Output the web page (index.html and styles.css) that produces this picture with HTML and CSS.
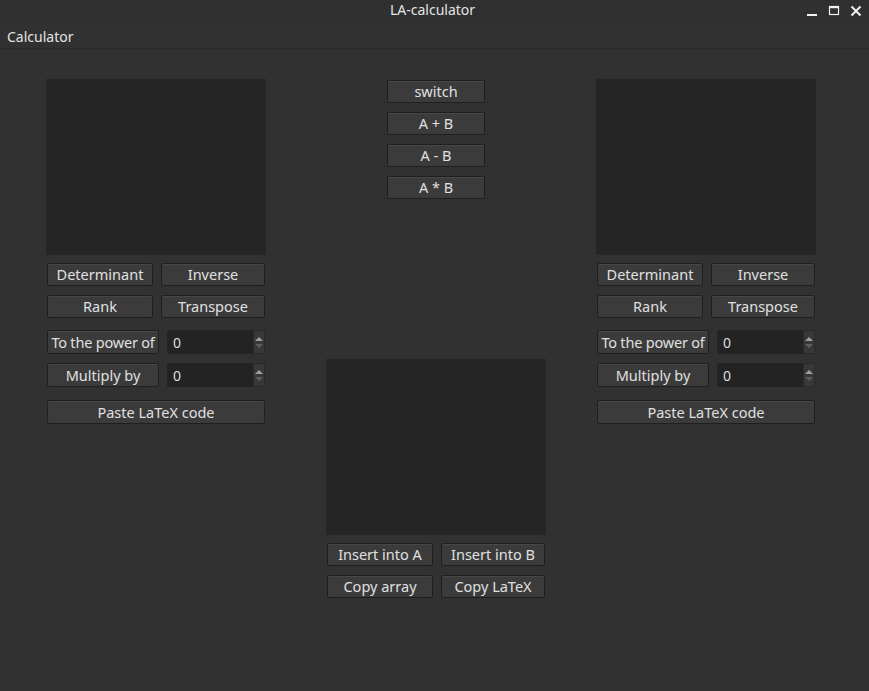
FILE: index.html
```html
<!DOCTYPE html>
<html>
<head>
<meta charset="utf-8">
<title>LA-calculator</title>
<link rel="stylesheet" href="styles.css">
</head>
<body>
<div class="window">
  <header class="titlebar">
    <span class="title">LA-calculator</span>
    <div class="controls">
      <svg class="ctl" width="14" height="14" viewBox="0 0 14 14"><rect x="2" y="10" width="10" height="2" fill="#f0f0f0"/></svg>
      <svg class="ctl" width="14" height="14" viewBox="0 0 14 14"><rect x="2.5" y="2.5" width="9" height="8" fill="none" stroke="#f0f0f0" stroke-width="1.2"/><rect x="2" y="2" width="10" height="2.2" fill="#f0f0f0"/></svg>
      <svg class="ctl" width="14" height="14" viewBox="0 0 14 14"><path d="M2.5 2.5 L11.5 11.5 M11.5 2.5 L2.5 11.5" stroke="#f0f0f0" stroke-width="2"/></svg>
    </div>
  </header>
  <nav class="menubar"><span class="menu-item">Calculator</span></nav>
  <main class="content">
    <section class="panel">
      <div class="matrix"></div>
      <div class="grid2">
        <button class="btn">Determinant</button>
        <button class="btn">Inverse</button>
        <button class="btn">Rank</button>
        <button class="btn">Transpose</button>
      </div>
      <div class="spinrows">
        <button class="btn">To the power of</button>
        <div class="spin"><span>0</span><span class="arrows"><i class="up"></i><i class="down"></i></span></div>
        <button class="btn">Multiply by</button>
        <div class="spin"><span>0</span><span class="arrows"><i class="up"></i><i class="down"></i></span></div>
      </div>
      <button class="btn wide">Paste LaTeX code</button>
    </section>
    <section class="center">
      <div class="ops">
        <button class="btn op">switch</button>
        <button class="btn op">A + B</button>
        <button class="btn op">A - B</button>
        <button class="btn op">A * B</button>
      </div>
      <div class="result">
        <div class="matrix"></div>
        <div class="grid2">
          <button class="btn">Insert into A</button>
          <button class="btn">Insert into B</button>
          <button class="btn">Copy array</button>
          <button class="btn">Copy LaTeX</button>
        </div>
      </div>
    </section>
    <section class="panel right">
      <div class="matrix"></div>
      <div class="grid2">
        <button class="btn">Determinant</button>
        <button class="btn">Inverse</button>
        <button class="btn">Rank</button>
        <button class="btn">Transpose</button>
      </div>
      <div class="spinrows">
        <button class="btn">To the power of</button>
        <div class="spin"><span>0</span><span class="arrows"><i class="up"></i><i class="down"></i></span></div>
        <button class="btn">Multiply by</button>
        <div class="spin"><span>0</span><span class="arrows"><i class="up"></i><i class="down"></i></span></div>
      </div>
      <button class="btn wide">Paste LaTeX code</button>
    </section>
  </main>
</div>
</body>
</html>
```
FILE: styles.css
```css
* { box-sizing: border-box; }
html, body { margin: 0; padding: 0; }
body {
  width: 869px;
  height: 691px;
  background: #313131;
  font-family: "Noto Sans", "DejaVu Sans", sans-serif;
  color: #dedede;
  overflow: hidden;
}
.window { display: flex; flex-direction: column; height: 100%; }
.titlebar {
  height: 24px;
  position: relative;
  display: flex;
  align-items: center;
  justify-content: center;
  background: #303030;
}
.title { font-size: 14px; color: #e4e4e4; margin-left: -4px; margin-top: -5px; }
.controls {
  position: absolute;
  right: 6px;
  top: 4px;
  display: flex;
  gap: 8px;
}
.ctl { display: block; }
.menubar {
  height: 25px;
  border-bottom: 1px solid #2a2a2a;
  display: flex;
  align-items: center;
  padding-left: 7px;
}
.menu-item { font-size: 14px; color: #e4e4e4; margin-top: 1px; }
.content {
  display: grid;
  grid-template-columns: 220px 220px 220px;
  column-gap: 60px;
  padding-left: 46px;
  padding-top: 30px;
}
.panel { display: flex; flex-direction: column; width: 220px; }
.panel.right { margin-left: -10px; }
.matrix {
  height: 176px;
  background: #252525;
}
.grid2 {
  display: grid;
  grid-template-columns: 106px 104px;
  column-gap: 8px;
  row-gap: 9px;
  margin-top: 8px;
  padding-left: 1px;
}
.spinrows {
  display: grid;
  grid-template-columns: 112px 98px;
  grid-auto-rows: 24px;
  column-gap: 8px;
  row-gap: 9px;
  margin-top: 12px;
  padding-left: 1px;
}
.btn {
  height: 23px;
  background: #3b3b3b;
  border: 1px solid #1f1f1f;
  border-radius: 2px;
  box-shadow: inset 0 1px 0 #474747;
  color: #e0e0e0;
  font-family: inherit;
  font-size: 14.5px;
  padding: 0;
  white-space: nowrap;
  line-height: 19px;
}
.spinrows .btn { height: 24px; }
.spinrows .btn:first-child { letter-spacing: -0.2px; }
.spin {
  height: 24px;
  background: #232323;
  border-radius: 2px;
  display: flex;
  align-items: center;
  justify-content: space-between;
  font-size: 14px;
  color: #dedede;
  padding-left: 6px;
}
.arrows {
  width: 12px;
  height: 24px;
  background: #383838;
  border: 1px solid #2a2a2a;
  display: flex;
  flex-direction: column;
  align-items: center;
  justify-content: center;
  gap: 3px;
  border-radius: 0 2px 2px 0;
}
.arrows i { display: block; width: 0; height: 0; border-left: 4px solid transparent; border-right: 4px solid transparent; }
.arrows .up { border-bottom: 4px solid #a0a0a0; }
.arrows .down { border-top: 4px solid #5e5e5e; }
.wide { margin-top: 13px; margin-left: 1px; width: 218px; height: 24px; }
.center { display: flex; flex-direction: column; }
.ops {
  display: flex;
  flex-direction: column;
  align-items: center;
  gap: 9px;
  padding-top: 1px;
}
.op { width: 98px; }
.result { margin-top: 160px; }
```
